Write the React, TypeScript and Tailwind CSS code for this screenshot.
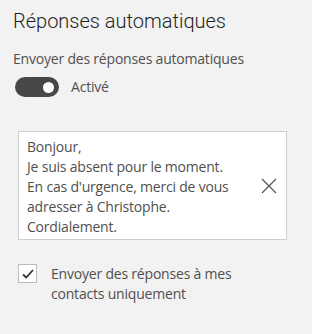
const font = { fontFamily: '"Open Sans", "Noto Sans", sans-serif' };
const titleFont = { fontFamily: 'Roboto, "Open Sans", sans-serif' };

export default function App() {
  return (
    <div className="h-[334px] w-[312px] bg-[#f2f2f2] text-[#444]" style={font}>
      <div className="px-[13px] pt-[7px]">
        <h1 className="text-[20px] font-light leading-[28px] text-[#1f1f1f]" style={titleFont}>
          Réponses automatiques
        </h1>
        <p className="mt-[14px] text-[14px] leading-[20px] tracking-[-0.2px] text-[#505050]">
          Envoyer des réponses automatiques
        </p>
        <div className="mt-[8px] flex items-center pl-[2px]">
          <div className="flex h-[20px] w-[44px] items-center justify-end rounded-full bg-[#474747] pr-[5px]">
            <div className="h-[11px] w-[11px] rounded-full bg-white" />
          </div>
          <span className="ml-[12px] text-[14px] leading-[20px] tracking-[-0.2px] text-[#505050]">Activé</span>
        </div>
      </div>

      <div className="ml-[18px] mt-[34px] flex h-[109px] w-[269px] items-center border border-[#cfcfcf] bg-white pl-[8px] pr-[9px]">
        <div className="flex-1 self-start pt-[5px] text-[14px] leading-[20px] tracking-[-0.2px] text-[#505050]">
          <div>Bonjour,</div>
          <div>Je suis absent pour le moment.</div>
          <div>En cas d'urgence, merci de vous</div>
          <div>adresser à Christophe.</div>
          <div>Cordialement.</div>
        </div>
        <svg width="16" height="16" viewBox="0 0 16 16" className="text-[#555]">
          <path d="M1 1 L15 15 M15 1 L1 15" stroke="currentColor" strokeWidth="1.2" fill="none" />
        </svg>
      </div>

      <div className="ml-[18px] mt-[24px] flex items-start">
        <div className="flex h-[19px] w-[19px] items-center justify-center border border-[#bdbdbd] bg-white">
          <svg width="12" height="10" viewBox="0 0 12 10">
            <path d="M1 5.5 L4.2 8.5 L11 1" stroke="#333" strokeWidth="1.8" fill="none" />
          </svg>
        </div>
        <p className="ml-[14px] text-[14px] leading-[20px] tracking-[-0.2px] text-[#505050]">
          Envoyer des réponses à mes
          <br />
          contacts uniquement
        </p>
      </div>
    </div>
  );
}
